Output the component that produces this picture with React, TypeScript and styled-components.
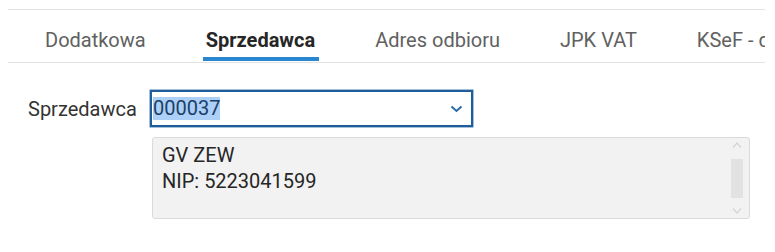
import React from "react";
import styled, { createGlobalStyle } from "styled-components";

const Global = createGlobalStyle`
  html, body { margin: 0; padding: 0; background: #ffffff; }
  body { font-family: Roboto, "Liberation Sans", Arial, sans-serif; }
`;

const Page = styled.div`
  width: 757px;
  margin-left: 8px;
  padding-top: 9px;
  overflow: hidden;
`;

const TabBar = styled.div`
  display: flex;
  height: 52px;
  padding-left: 7px;
  border-top: 1px solid #e3e3e3;
  border-bottom: 1px solid #e3e3e3;
  white-space: nowrap;
`;

const Tab = styled.div<{ $active?: boolean }>`
  position: relative;
  flex: none;
  padding: 18px 30px 0 30px;
  font-size: 20px;
  line-height: 24px;
  font-weight: ${(p) => (p.$active ? 700 : 400)};
  color: ${(p) => (p.$active ? "#262626" : "#616161")};

  &::after {
    content: "";
    display: ${(p) => (p.$active ? "block" : "none")};
    position: absolute;
    left: 27px;
    right: 26px;
    bottom: 1px;
    height: 4px;
    background: #2a86cf;
  }
`;

const Form = styled.div`
  display: grid;
  grid-template-columns: 122px auto;
  row-gap: 10px;
  padding: 27px 0 0 20px;
  align-items: center;
`;

const Label = styled.label`
  font-size: 20px;
  line-height: 24px;
  color: #333333;
  padding-top: 1px;
`;

const Select = styled.div`
  box-sizing: border-box;
  width: 323px;
  height: 37px;
  border: 2px solid #1f5e9b;
  box-shadow: 0 0 0 0.5px #4a80b5;
  display: flex;
  align-items: center;
  padding: 0 8px 0 1px;
  justify-content: space-between;
`;

const SelectedValue = styled.span`
  font-size: 20px;
  line-height: 23px;
  background: #acd0f7;
  color: #1b3f66;
`;

const Chevron = styled.svg`
  width: 13px;
  height: 8px;
  display: block;
`;

const InfoBox = styled.div`
  grid-column: 2;
  position: relative;
  box-sizing: border-box;
  margin-left: 2px;
  width: 598px;
  height: 82px;
  background: #f2f2f2;
  border: 1px solid #dadada;
  border-radius: 3px;
  padding: 4px 9px;
  font-size: 20px;
  line-height: 26px;
  color: #262626;
`;

const Line = styled.div``;

const ScrollTrack = styled.div`
  position: absolute;
  top: 4px;
  bottom: 4px;
  right: 6px;
  width: 12px;
  display: flex;
  flex-direction: column;
  align-items: center;
  justify-content: space-between;
`;

const Arrow = styled.svg`
  width: 10px;
  height: 6px;
  display: block;
`;

const Thumb = styled.div`
  width: 12px;
  height: 39px;
  background: #e2e2e2;
`;

export default function App() {
  const tabs = ["Dodatkowa", "Sprzedawca", "Adres odbioru", "JPK VAT", "KSeF - dane"];
  return (
    <>
      <Global />
      <Page>
        <TabBar>
          {tabs.map((t) => (
            <Tab key={t} $active={t === "Sprzedawca"}>
              {t}
            </Tab>
          ))}
        </TabBar>
        <Form>
          <Label>Sprzedawca</Label>
          <Select>
            <SelectedValue>000037</SelectedValue>
            <Chevron viewBox="0 0 13 8">
              <path d="M1.5 1.5 L6.5 6 L11.5 1.5" fill="none" stroke="#2a6aa8" strokeWidth="2" />
            </Chevron>
          </Select>
          <InfoBox>
            <Line>GV ZEW</Line>
            <Line>NIP: 5223041599</Line>
            <ScrollTrack>
              <Arrow viewBox="0 0 10 6">
                <path d="M1 5.5 L5 1 L9 5.5" fill="none" stroke="#d4d4d4" strokeWidth="1.2" />
              </Arrow>
              <Thumb />
              <Arrow viewBox="0 0 10 6">
                <path d="M1 0.5 L5 5 L9 0.5" fill="none" stroke="#d4d4d4" strokeWidth="1.2" />
              </Arrow>
            </ScrollTrack>
          </InfoBox>
        </Form>
      </Page>
    </>
  );
}
